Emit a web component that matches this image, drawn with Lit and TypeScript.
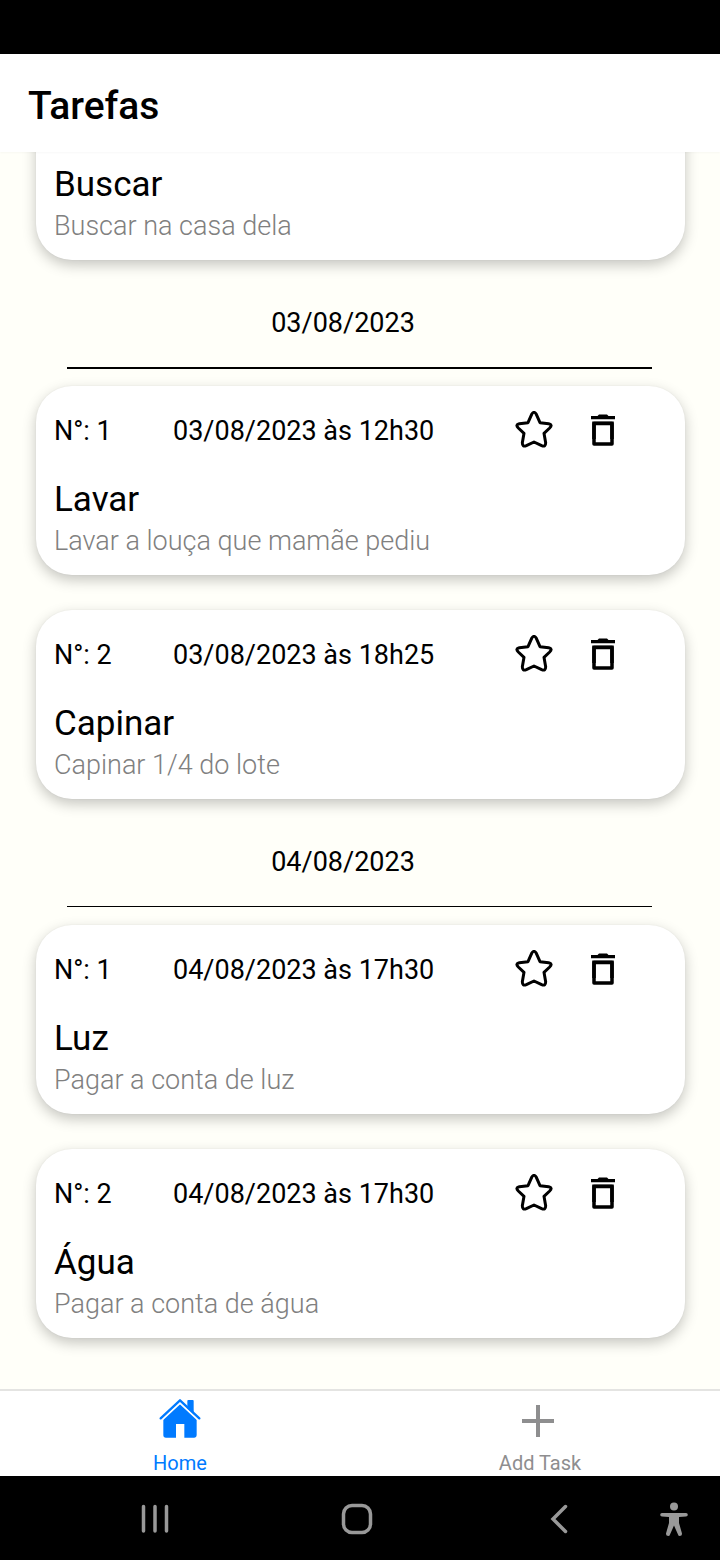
import { LitElement, html, css, nothing } from "lit";
import { customElement, property } from "lit/decorators.js";

interface Task {
  number?: number;
  when?: string;
  title: string;
  description: string;
}

interface Day {
  date?: string;
  tasks: Task[];
}

const days: Day[] = [
  { tasks: [{ title: "Buscar", description: "Buscar na casa dela" }] },
  {
    date: "03/08/2023",
    tasks: [
      { number: 1, when: "03/08/2023 às 12h30", title: "Lavar", description: "Lavar a louça que mamãe pediu" },
      { number: 2, when: "03/08/2023 às 18h25", title: "Capinar", description: "Capinar 1/4 do lote" },
    ],
  },
  {
    date: "04/08/2023",
    tasks: [
      { number: 1, when: "04/08/2023 às 17h30", title: "Luz", description: "Pagar a conta de luz" },
      { number: 2, when: "04/08/2023 às 17h30", title: "Água", description: "Pagar a conta de água" },
    ],
  },
];

@customElement("task-card")
class TaskCard extends LitElement {
  @property({ attribute: false }) task!: Task;

  static styles = css`
    :host {
      display: block;
    }
    .card {
      box-sizing: border-box;
      min-height: 189px;
      display: flex;
      flex-direction: column;
      justify-content: flex-end;
      padding: 25px 18px 17px;
      border-radius: 36px;
      background: #fff;
      box-shadow: 0 5px 14px rgba(0, 0, 0, 0.23), 0 0 2px rgba(0, 0, 0, 0.05);
    }
    .meta {
      display: grid;
      grid-template-columns: 119px 1fr auto;
      align-items: center;
      height: 38px;
      padding-right: 51px;
      margin-bottom: 30px;
      font-size: 27px;
      line-height: 34px;
    }
    .meta > span,
    time {
      padding-top: 2px;
    }
    .actions {
      display: flex;
      align-items: center;
      gap: 37px;
    }
    button {
      display: flex;
      padding: 0;
      border: 0;
      background: none;
      color: #000;
    }
    svg {
      display: block;
    }
    h2 {
      margin: 0 0 3px;
      font-size: 35px;
      line-height: 42px;
      font-weight: 400;
    }
    p {
      margin: 0;
      font-size: 27px;
      line-height: 34px;
      font-weight: 300;
      color: #808080;
    }
  `;

  render() {
    const t = this.task;
    return html`
      <article class="card">
        ${t.when
          ? html`<div class="meta">
              <span>N°: ${t.number}</span>
              <time>${t.when}</time>
              <div class="actions">
                <button aria-label="Favoritar">
                  <svg width="38" height="38" viewBox="-1 3 114 114" fill="none" stroke="currentColor" stroke-width="9" stroke-linejoin="round">
                    <path d="M49 13Q56 1 63 13L74 38L100 41Q113 44 103 54L86 70L91 98Q91 112 79 107L56 96L33 107Q21 112 21 98L26 70L9 54Q-1 44 12 41L38 38Z" />
                  </svg>
                </button>
                <button aria-label="Excluir">
                  <svg width="26" height="32" viewBox="0 0 26 32" fill="none">
                    <path fill="currentColor" d="M1 2H7.500L9 0.500H17L18.500 2H25V5.200H1Z" />
                    <path stroke="currentColor" stroke-width="3.500" stroke-linejoin="round" d="M4 9.500H22V30H4Z" />
                    <path stroke="currentColor" stroke-width="3.500" d="M4 25V9.300H22V25" />
                  </svg>
                </button>
              </div>
            </div>`
          : nothing}
        <h2>${t.title}</h2>
        <p>${t.description}</p>
      </article>
    `;
  }
}

@customElement("app-root")
class AppRoot extends LitElement {
  static styles = css`
    :host {
      display: flex;
      flex-direction: column;
      height: 100vh;
      overflow: hidden;
      font-family: Roboto, sans-serif;
      color: #000;
      background: #fffff9;
    }
    .status {
      flex: none;
      height: 54px;
      background: #000;
    }
    .header {
      flex: none;
      display: flex;
      align-items: center;
      height: 98px;
      padding: 0 28px;
      background: #fff;
      box-shadow: 0 1px 2px rgba(0, 0, 0, 0.03);
      z-index: 1;
    }
    h1 {
      margin: 0;
      padding-top: 6px;
      font-size: 39px;
      line-height: 46px;
      font-weight: 500;
    }
    .list {
      flex: 1;
      min-height: 0;
      overflow: hidden;
      display: flex;
      flex-direction: column;
      justify-content: flex-end;
      padding: 0 35px 51px 36px;
    }
    .tasks {
      display: flex;
      flex-direction: column;
      gap: 35px;
    }
    .date {
      box-sizing: border-box;
      height: 107px;
      margin: 0 33px 0 31px;
      padding: 46px 33px 0 0;
      font-size: 27px;
      line-height: 34px;
      text-align: center;
    }
    .rule {
      height: 2px;
      margin: 0 33px 17px 31px;
      border: 0;
      background: #000;
    }
    .thin {
      height: 1px;
      margin-bottom: 18px;
    }
    .tabs {
      flex: none;
      display: flex;
      height: 85px;
      border-top: 2px solid #e4e4e2;
      background: #fff;
    }
    .tab {
      flex: 1;
      display: flex;
      flex-direction: column;
      align-items: center;
      justify-content: space-between;
      padding-top: 7px;
      font-size: 20px;
      line-height: 26px;
      color: #8e8e8f;
      text-decoration: none;
    }
    .active {
      color: #007aff;
    }
    .system {
      flex: none;
      display: grid;
      grid-template-columns: 202fr 202fr 202fr 28fr;
      height: 84px;
      padding: 2px 32px 0 54px;
      box-sizing: border-box;
      background: #000;
      color: #999;
    }
    .key {
      display: flex;
      align-items: center;
      justify-content: center;
      padding: 0;
      border: 0;
      background: none;
      color: inherit;
    }
    svg {
      display: block;
    }
  `;

  render() {
    return html`
      <div class="status"></div>
      <header class="header"><h1>Tarefas</h1></header>
      <main class="list">
        ${days.map(
          (day, i) => html`<section>
            ${day.date
              ? html`<div class="date">${day.date}</div>
                  <hr class="rule ${i === 2 ? "thin" : ""}" />`
              : nothing}
            <div class="tasks">${day.tasks.map((t) => html`<task-card .task=${t}></task-card>`)}</div>
          </section>`
        )}
      </main>
      <nav class="tabs">
        <a class="tab active" href="#home">
          <svg width="42" height="42" viewBox="0 0 126 126" fill="currentColor">
            <path d="M63 17L113 62V112Q113 119 106 119H76V78H51V119H21Q13 119 13 112V62Z" />
            <path d="M85 9Q85 6 88 6H101Q104 6 104 9V50L85 32Z" />
            <path d="M5 69L63 15L121 69" fill="none" stroke="#fff" stroke-width="6" />
            <path d="M5 61L63 7L121 61" fill="none" stroke="currentColor" stroke-width="7" stroke-linecap="round" stroke-linejoin="round" />
          </svg>
          <span>Home</span>
        </a>
        <a class="tab" href="#add">
          <svg width="38" height="42" viewBox="0 0 38 42" stroke="currentColor" stroke-width="4">
            <path d="M1 23H33M17 7V39" />
          </svg>
          <span>Add Task</span>
        </a>
      </nav>
      <footer class="system">
        <button class="key" aria-label="Recentes">
          <svg width="28" height="30" viewBox="0 0 28 30" stroke="currentColor" stroke-width="3.500" stroke-linecap="round">
            <path d="M2.500 2.500V27M14 2.500V27M25.500 2.500V27" />
          </svg>
        </button>
        <button class="key" aria-label="Início">
          <svg width="32" height="32" viewBox="0 0 32 32" fill="none" stroke="currentColor" stroke-width="3.500">
            <rect x="2.500" y="2.500" width="27" height="27" rx="8.500" />
          </svg>
        </button>
        <button class="key" aria-label="Voltar">
          <svg width="18" height="30" viewBox="0 0 18 30" fill="none" stroke="currentColor" stroke-width="3.500" stroke-linecap="round">
            <path d="M15.500 2.500L3 15L15.500 27.500" />
          </svg>
        </button>
        <button class="key" aria-label="Acessibilidade">
          <svg width="28" height="34" viewBox="0 0 28 34" fill="currentColor">
            <circle cx="14" cy="4.500" r="4" />
            <path d="M2 11H26A1.800 1.800 0 0 1 26 14.600L19 15V21L22 31.500Q22 34 19.500 34Q18.500 34 18 32.500L14 23.500L10 32.500Q9.500 34 8.500 34Q6 34 6 31.500L9 21V15L2 14.600A1.800 1.800 0 0 1 2 11Z" />
          </svg>
        </button>
      </footer>
    `;
  }
}
